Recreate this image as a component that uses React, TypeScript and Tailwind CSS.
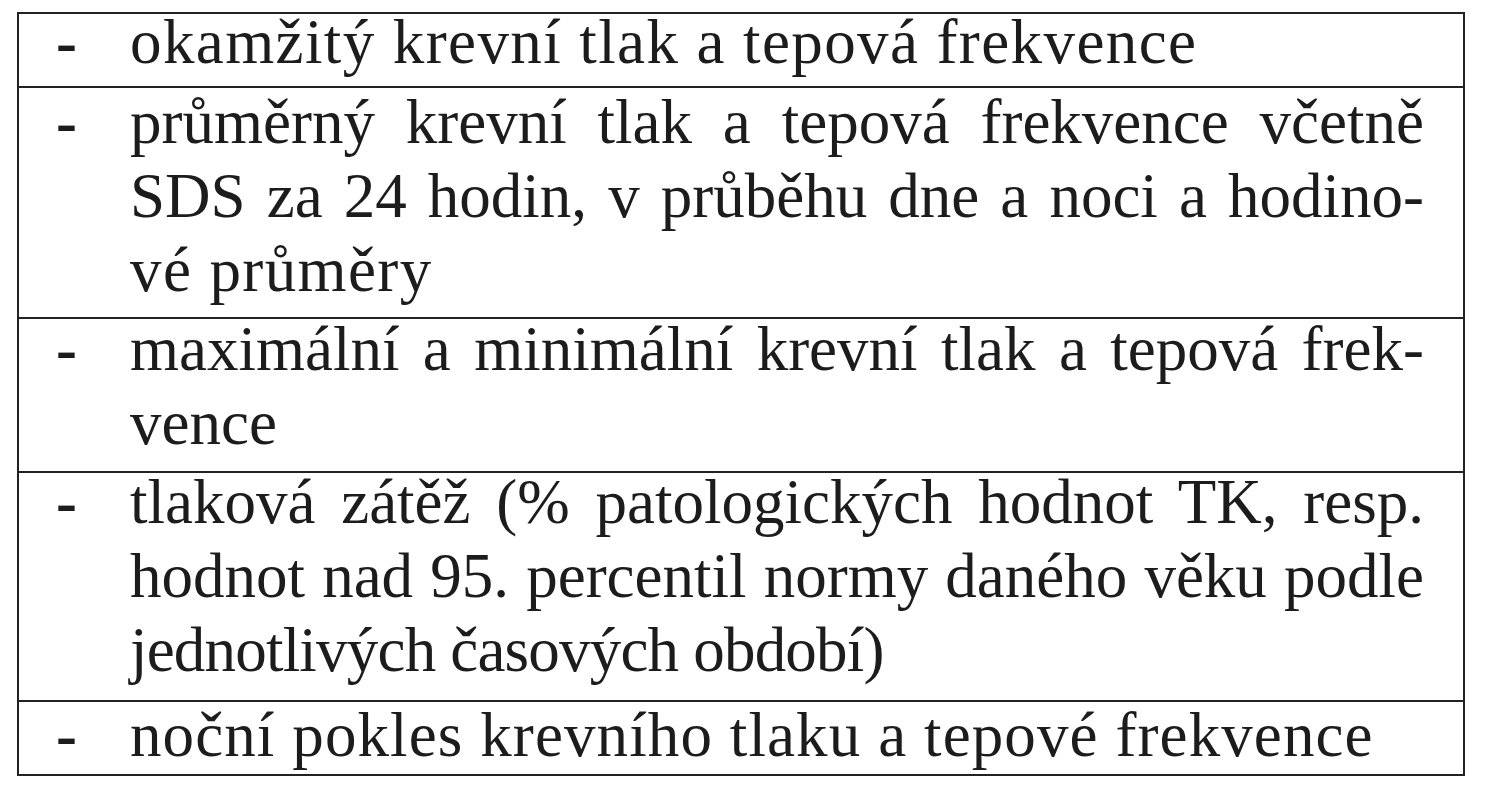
const rows = [
  {
    row: "pb-[7px]",
    inner: "-mt-[9px]",
    lines: ["okamžitý krevní tlak a tepová frekvence"],
    last: "tracking-[1.4px]",
  },
  {
    row: "border-t-2 border-[#222] pb-[10px]",
    inner: "-mt-[3px]",
    lines: [
      "průměrný krevní tlak a tepová frekvence včetně",
      "SDS za 24 hodin, v průběhu dne a noci a hodino-",
      "vé průměry",
    ],
    last: "tracking-[1.4px]",
  },
  {
    row: "border-t-2 border-[#222] pb-[11px]",
    inner: "-mt-[7px]",
    lines: ["maximální a minimální krevní tlak a tepová frek-", "vence"],
    last: "",
  },
  {
    row: "border-t-2 border-[#222] pb-[13px]",
    inner: "-mt-[8px]",
    lines: [
      "tlaková zátěž (% patologických hodnot TK, resp.",
      "hodnot nad 95. percentil normy daného věku podle",
      "jednotlivých časových období)",
    ],
    last: "tracking-[-0.8px]",
  },
  {
    row: "border-t-2 border-[#222] pb-[2px]",
    inner: "-mt-[4px]",
    lines: ["noční pokles krevního tlaku a tepové frekvence"],
    last: "tracking-[1.1px]",
  },
];

export default function App() {
  return (
    <div className="min-h-screen w-full bg-white pt-[12px] pl-[17px] font-['Liberation_Serif',serif] text-[63px] leading-[74px] text-[#1c1c1c]">
      <div className="w-[1448px] border-2 border-[#222]">
        {rows.map((r, i) => (
          <div key={i} className={r.row}>
            <div className={"flex " + r.inner}>
              <div className="w-[111px] shrink-0 pl-[37px] font-bold">-</div>
              <div className="w-[1294px] shrink-0">
                {r.lines.map((line, j) => (
                  <div
                    key={j}
                    className={
                      j < r.lines.length - 1
                        ? "whitespace-nowrap text-justify [text-align-last:justify]"
                        : "whitespace-nowrap " + r.last
                    }
                  >
                    {line}
                  </div>
                ))}
              </div>
            </div>
          </div>
        ))}
      </div>
    </div>
  );
}
